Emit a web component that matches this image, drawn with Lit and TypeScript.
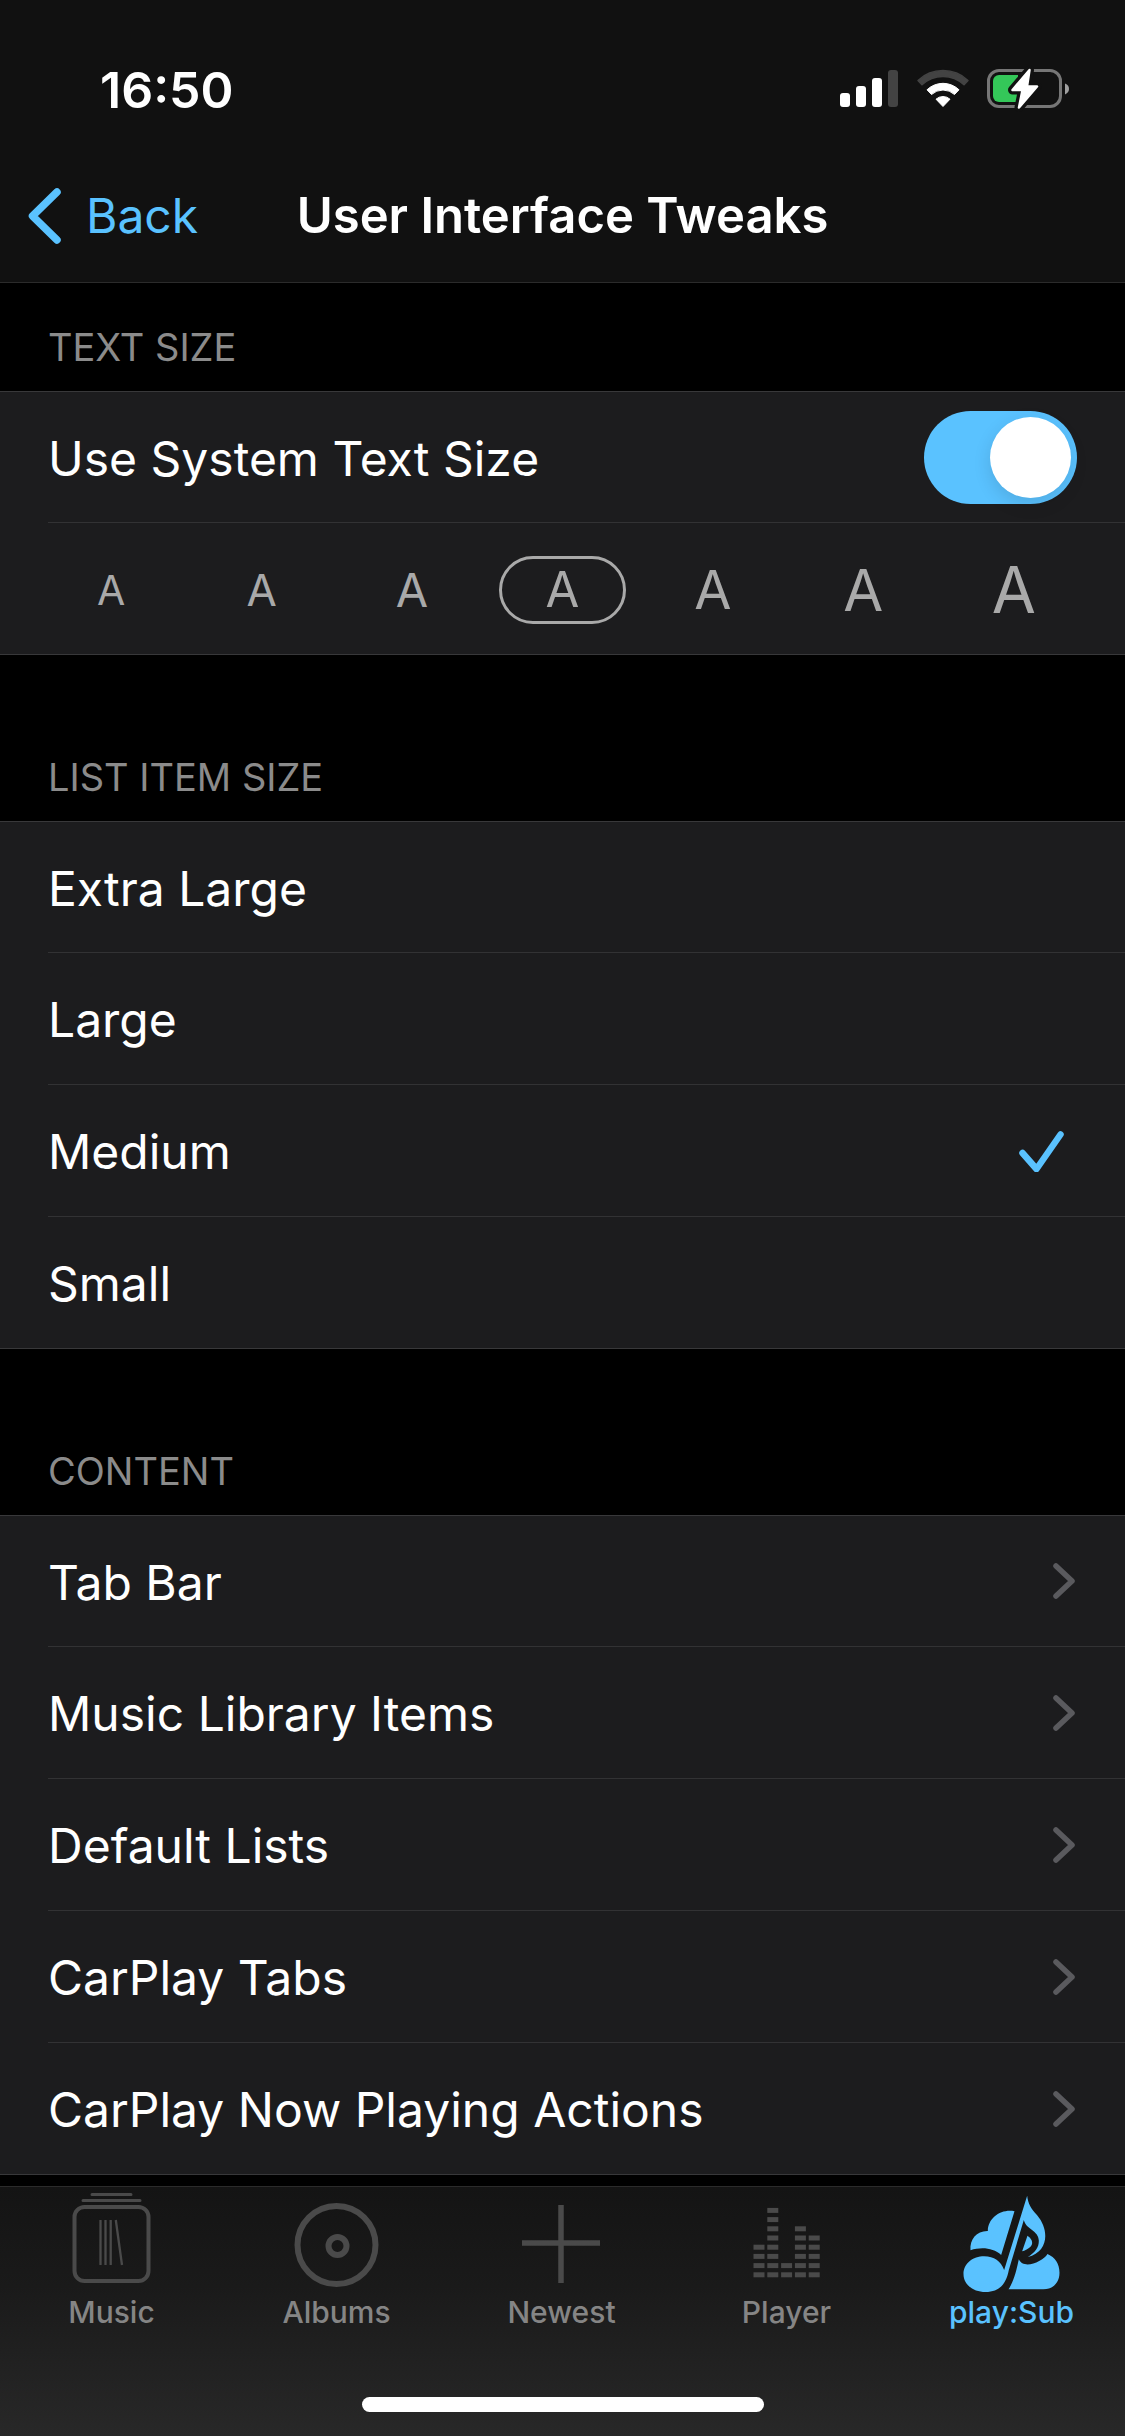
import { LitElement, html, svg, css, nothing } from "lit";
import { customElement, property, state } from "lit/decorators.js";
import { classMap } from "lit/directives/class-map.js";

const SIZES = ["a1", "a2", "a3", "a4", "a5", "a6", "a7"];
const ITEM_SIZES = ["Extra Large", "Large", "Medium", "Small"];
const CONTENT = ["Tab Bar", "Music Library Items", "Default Lists", "CarPlay Tabs", "CarPlay Now Playing Actions"];
const METER = [4, 8, 2, 6, 5];

@customElement("status-bar")
class StatusBar extends LitElement {
  static styles = css`
    :host { display: flex; justify-content: space-between; align-items: center; height: 150px; padding: 28px 56px 0 100px; box-sizing: border-box; }
    .time { padding-top: 2px; font-size: 50px; line-height: 60px; font-weight: 600; color: #fff; }
    .icons { display: block; width: 232px; height: 48px; }
  `;
  render() {
    return html`
      <span class="time">16:50</span>
      <svg class="icons" viewBox="0 0 232 48" aria-hidden="true">
        <g fill="#fff">
          <rect x="3" y="28" width="10" height="14" rx="3" />
          <rect x="19" y="21" width="10" height="21" rx="3" />
          <rect x="35" y="13" width="10" height="29" rx="3" />
          <rect x="51" y="5" width="10" height="37" rx="3" fill="#434343" />
        </g>
        <path d="M81 15.500A36.500 36.500 0 0 1 131 15.500L127 19.800A31 31 0 0 0 85 19.800Z" fill="#434343" stroke="#434343" stroke-width="1.500" stroke-linejoin="round" />
        <path d="M90 24.800A23 23 0 0 1 122 24.800L117.500 29.500A17 17 0 0 0 94.500 29.500Z" fill="#fff" stroke="#fff" stroke-width="1" stroke-linejoin="round" />
        <path d="M99 34.200A10.500 10.500 0 0 1 113 34.200L106 41.500Z" fill="#fff" stroke="#fff" stroke-width="1" stroke-linejoin="round" />
        <rect x="151.500" y="5.500" width="72" height="36" rx="10.500" fill="none" stroke="#767676" stroke-width="3" />
        <path d="M228 18.500C231 19.500 232 21.500 232 23.800S231 28 228 29.500Z" fill="#a0a0a0" />
        <path d="M181 10H162A6 6 0 0 0 156 16V31A6 6 0 0 0 162 37H181Z" fill="#34c759" />
        <path d="M192.500 5L175.500 25H185.500L182 42.500L200 21.500H190Z" fill="#111" stroke="#111" stroke-width="9" stroke-linejoin="round" />
        <path d="M192.500 5L175.500 25H185.500L182 42.500L200 21.500H190Z" fill="#fff" stroke="#fff" stroke-width="2.500" stroke-linejoin="round" />
      </svg>
    `;
  }
}

@customElement("tab-item")
class TabItem extends LitElement {
  @property() name = "";
  @property({ type: Boolean }) active = false;

  static styles = css`
    :host { flex: 1; min-width: 0; }
    .tab { display: flex; flex-direction: column; align-items: center; padding: 1px 2px 0 0; text-decoration: none; color: #858585; }
    .icon { display: block; width: 120px; height: 106px; color: #4a4a4a; }
    .label { font-size: 30px; line-height: 36px; font-weight: 500; }
    .active, .active .icon { color: #5ac2ff; }
  `;

  icon() {
    switch (this.name) {
      case "Music":
        return svg`
          <g fill="none" stroke="currentColor">
            <rect x="22.500" y="19" width="74" height="74" rx="10" stroke-width="4" />
            <path d="M40 6.500H79M31 12.500H88" stroke-width="3" stroke-linecap="round" />
            <path d="M48.500 32V77M53.500 32V77M58.700 32V77M63.800 32L70 77" stroke-width="2.300" />
          </g>`;
      case "Albums":
        return svg`
          <g fill="none" stroke="currentColor" stroke-width="6">
            <circle cx="59.500" cy="57" r="39" />
            <circle cx="60.500" cy="58" r="9" />
          </g>`;
      case "Newest":
        return svg`<path d="M20 55H98M59 17V95" fill="none" stroke="currentColor" stroke-width="5.500" />`;
      case "Player":
        return svg`
          <g fill="currentColor">
            ${METER.map((n, c) =>
              Array.from({ length: n }, (_, r) => svg`<rect x=${26.5 + c * 13.8} y=${84.3 - r * 9.2} width="11" height="5" />`))}
          </g>`;
      default:
        return svg`
          <g transform="translate(7.500 2) scale(.3333)" fill="currentColor">
            <path d="M165 64C125 56 85 84 85 123C52 122 30 148 33 181C66 170 102 174 125 195Z" />
            <path d="M203 17C206 42 214 54 233 76C270 120 268 185 205 201C228 186 238 172 238 152C237 120 200 120 193 90L148 240C140 280 122 306 78 306C40 306 12 283 12 252C12 221 40 199 74 199C104 199 124 214 134 240Z" />
            <path d="M204 137C212 142 218 150 218 158C218 170 205 178 188 184Z" />
            <path d="M178 208C192 240 250 215 264 192C287 202 300 222 300 248C300 278 280 298 252 298H147C164 272 170 244 178 208Z" />
          </g>`;
    }
  }

  render() {
    return html`
      <a class=${classMap({ tab: true, active: this.active })} href="#" aria-current=${this.active ? "page" : nothing}>
        <svg class="icon" viewBox="0 0 120 106" aria-hidden="true">${this.icon()}</svg>
        <span class="label">${this.name}</span>
      </a>
    `;
  }
}

@customElement("app-root")
class AppRoot extends LitElement {
  @state() systemSize = true;
  @state() itemSize = "Medium";

  static styles = css`
    :host {
      display: flex; flex-direction: column; min-height: 100vh; background: #000; color: #fff;
      font-family: Inter, "Liberation Sans", sans-serif;
    }
    .top { background: #111; border-bottom: 1px solid #2b2b2b; }
    .nav { display: grid; grid-template-columns: 1fr auto 1fr; align-items: center; height: 132px; padding: 0 24px; }
    .back {
      display: flex; align-items: center; gap: 20px; justify-self: start; padding: 0; border: 0; background: none;
      font: inherit; font-size: 48px; line-height: 60px; color: #5ac2ff;
    }
    .chevron { display: block; width: 42px; height: 60px; }
    .title { margin: 0; font-size: 49px; line-height: 60px; font-weight: 600; }
    .main { flex: 1; }
    .section { margin: 0; padding: 0; border: 0; min-width: 0; }
    .heading {
      display: flex; align-items: flex-end; box-sizing: border-box; height: 166px; margin: 0; padding: 0 48px 20px;
      font-size: 38px; line-height: 48px; font-weight: 400; color: #8b8b8b; text-transform: uppercase;
    }
    .first { height: 108px; }
    .group { list-style: none; margin: 0; padding: 0; background: #1c1c1e; }
    .row { box-sizing: border-box; display: flex; height: 132px; padding-left: 48px; }
    .row:first-child { border-top: 1px solid #38383a; }
    .row:last-child { padding-left: 0; border-bottom: 1px solid #38383a; }
    .cell {
      position: relative; flex: 1; display: flex; align-items: center; justify-content: space-between;
      padding: 0 48px 0 0; border-bottom: 1px solid #323234; font-size: 48px; line-height: 60px; color: #fff;
      text-decoration: none;
    }
    .row:last-child .cell { border-bottom: 0; padding-left: 48px; }
    .text { padding-top: 3px; }
    .radio { position: absolute; inset: 0; width: 100%; height: 100%; margin: 0; opacity: 0; }
    .check { width: 48px; height: 42px; margin-right: 11px; }
    .arrow { width: 24px; height: 38px; }
    .switch {
      appearance: none; flex: none; display: flex; align-items: center; box-sizing: border-box; width: 153px; height: 93px;
      margin: 0; padding: 6px; border-radius: 47px; background: #39393d;
    }
    .switch::before { content: ""; width: 81px; height: 81px; border-radius: 50%; background: #fff; box-shadow: 0 6px 18px rgba(0, 0, 0, .12); }
    .switch:checked { justify-content: flex-end; background: #5ac2ff; }
    .row:last-child .sizes { padding: 2px 36px 0; }
    .size {
      position: relative; flex: 1; display: flex; justify-content: center; align-items: center;
      height: 68px; color: #a9a9a9; margin: 0 12px; box-sizing: border-box; border: 3px solid transparent;
    }
    .selected { border-color: #a9a9a9; border-radius: 34px; }
    .a1 { font-size: 41px; }
    .a2 { font-size: 44px; }
    .a3 { font-size: 47px; }
    .a4 { font-size: 49px; }
    .a5 { font-size: 54px; }
    .a6 { font-size: 58px; }
    .a7 { font-size: 64px; }
    .foot { box-sizing: border-box; height: 250px; border-top: 1px solid #2b2b2b; background: linear-gradient(#141414, #1a1a1a 40%, #282828); display: flex; flex-direction: column; justify-content: space-between; }
    .tabs { display: flex; }
    .home { align-self: center; width: 402px; height: 15px; margin-bottom: 24px; border-radius: 8px; background: #fff; }
  `;

  render() {
    return html`
      <header class="top">
        <status-bar></status-bar>
        <nav class="nav">
          <button class="back" type="button">
            <svg class="chevron" viewBox="0 0 42 60" aria-hidden="true">
              <path d="M33 6L8.500 30L33 54" fill="none" stroke="currentColor" stroke-width="7.500" stroke-linecap="round" stroke-linejoin="round" />
            </svg>
            <span>Back</span>
          </button>
          <h1 class="title">User Interface Tweaks</h1>
        </nav>
      </header>

      <main class="main">
        <section class="section">
          <h2 class="heading first">Text Size</h2>
          <ul class="group">
            <li class="row">
              <label class="cell">
                <span class="text">Use System Text Size</span>
                <input class="switch" type="checkbox" role="switch" .checked=${this.systemSize}
                  @change=${(e: Event) => (this.systemSize = (e.target as HTMLInputElement).checked)} />
              </label>
            </li>
            <li class="row">
              <div class="cell sizes">
                ${SIZES.map((s) => html`
                  <label class=${classMap({ size: true, [s]: true, selected: s === "a4" })}>
                    <input class="radio" type="radio" name="text-size" .checked=${s === "a4"} ?disabled=${this.systemSize} />
                    <span>A</span>
                  </label>`)}
              </div>
            </li>
          </ul>
        </section>

        <section class="section">
          <h2 class="heading">List Item Size</h2>
          <ul class="group">
            ${ITEM_SIZES.map((s) => html`
              <li class="row">
                <label class="cell">
                  <input class="radio" type="radio" name="item-size" .checked=${s === this.itemSize} @change=${() => (this.itemSize = s)} />
                  <span class="text">${s}</span>
                  ${s === this.itemSize
                    ? html`<svg class="check" viewBox="0 0 48 42" aria-hidden="true">
                        <path d="M4.500 23L18.500 39L42.500 4.500" fill="none" stroke="#5ac2ff" stroke-width="6.500" stroke-linecap="round" stroke-linejoin="round" />
                      </svg>`
                    : nothing}
                </label>
              </li>`)}
          </ul>
        </section>

        <section class="section">
          <h2 class="heading">Content</h2>
          <ul class="group">
            ${CONTENT.map((s) => html`
              <li class="row">
                <a class="cell" href="#">
                  <span class="text">${s}</span>
                  <svg class="arrow" viewBox="0 0 24 38" aria-hidden="true">
                    <path d="M3 4L19 19L3 34" fill="none" stroke="#5a5a5e" stroke-width="5.500" stroke-linecap="round" stroke-linejoin="round" />
                  </svg>
                </a>
              </li>`)}
          </ul>
        </section>
      </main>

      <footer class="foot">
        <nav class="tabs">
          ${["Music", "Albums", "Newest", "Player", "play:Sub"].map((n) => html`<tab-item name=${n} ?active=${n === "play:Sub"}></tab-item>`)}
        </nav>
        <div class="home"></div>
      </footer>
    `;
  }
}
